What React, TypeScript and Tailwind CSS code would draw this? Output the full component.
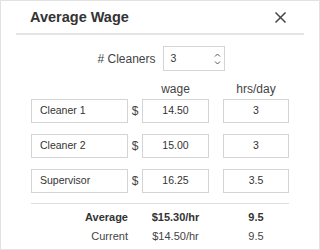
import React from "react";

const Box = ({ children, className = "" }: { children?: React.ReactNode; className?: string }) => (
  <div className={`h-[24px] border border-[#d4d4d4] bg-white flex items-center text-[10.5px] text-[#333] ${className}`}>{children}</div>
);

const rows = [
  { name: "Cleaner 1", wage: "14.50", hrs: "3" },
  { name: "Cleaner 2", wage: "15.00", hrs: "3" },
  { name: "Supervisor", wage: "16.25", hrs: "3.5" },
];

export default function App() {
  return (
    <div
      className="w-[320px] h-[250px] border border-[#e2e2e2] bg-white text-[#333] overflow-hidden"
      style={{ fontFamily: '"Liberation Sans", Arial, sans-serif' }}
    >
      <div className="mx-[15px] h-[34px] border-b-2 border-[#e4e4e4] flex items-center justify-between pl-[14px] pr-[18px] pt-[1px]">
        <div className="text-[14.5px] font-bold text-[#333]">Average Wage</div>
        <svg width="11" height="11" viewBox="0 0 11 11">
          <path d="M1 1 L10 10 M10 1 L1 10" stroke="#444" strokeWidth="1.5" strokeLinecap="square" fill="none" />
        </svg>
      </div>

      <div className="mt-[11px] flex items-center justify-center gap-[7px] pl-[2px]">
        <div className="text-[12px] text-[#444]">
          # Cleaners
        </div>
        <div className="w-[62px] h-[25px] border border-[#d4d4d4] flex items-center justify-between pl-[7px] pr-[3px] text-[10.5px]">
          <span>3</span>
          <svg width="7" height="14" viewBox="0 0 7 14">
            <path d="M1 4.5 L3.5 2 L6 4.5" stroke="#555" strokeWidth="1" fill="none" />
            <path d="M1 9.5 L3.5 12 L6 9.5" stroke="#555" strokeWidth="1" fill="none" />
          </svg>
        </div>
      </div>

      <div className="px-[30px] mt-[11px]">
        <div className="grid grid-cols-[97px_14px_67px_14px_66px] text-[12px] text-[#444] h-[14px] leading-[14px]">
          <div />
          <div />
          <div className="text-center">wage</div>
          <div />
          <div className="text-center">hrs/day</div>
        </div>
        <div className="mt-[3px] flex flex-col gap-[11px]">
          {rows.map((r) => (
            <div key={r.name} className="grid grid-cols-[97px_14px_67px_14px_66px] items-center">
              <Box className="pl-[8px]">{r.name}</Box>
              <div className="text-[12px] text-[#444] text-center">$</div>
              <Box className="justify-center">{r.wage}</Box>
              <div />
              <Box className="justify-center">{r.hrs}</Box>
            </div>
          ))}
        </div>
        <div className="mt-[10px] border-t border-[#dedede]" />
        <div className="mt-[6px] grid grid-cols-[97px_14px_67px_14px_66px] text-[11px] font-bold text-[#333] h-[14px] leading-[14px]">
          <div className="text-right">Average</div>
          <div />
          <div className="text-center">$15.30/hr</div>
          <div />
          <div className="text-center">9.5</div>
        </div>
        <div className="mt-[5px] grid grid-cols-[97px_14px_67px_14px_66px] text-[11px] text-[#444] h-[14px] leading-[14px]">
          <div className="text-right">Current</div>
          <div />
          <div className="text-center">$14.50/hr</div>
          <div />
          <div className="text-center">9.5</div>
        </div>
      </div>
    </div>
  );
}
